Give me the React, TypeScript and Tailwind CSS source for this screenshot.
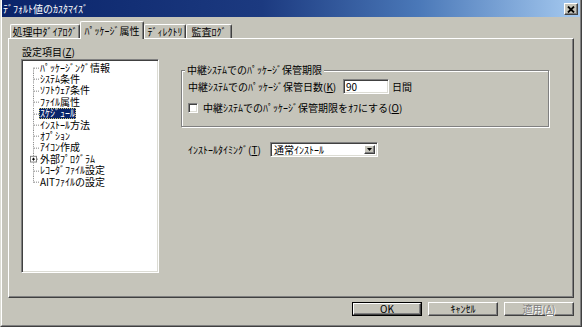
import React from 'react';

const treeItems = [
  'ﾊﾟｯｹｰｼﾞﾝｸﾞ情報',
  'ｼｽﾃﾑ条件',
  'ｿﾌﾄｳｪｱ条件',
  'ﾌｧｲﾙ属性',
  'ｽｹｼﾞｭｰﾙ',
  'ｲﾝｽﾄｰﾙ方法',
  'ｵﾌﾟｼｮﾝ',
  'ｱｲｺﾝ作成',
  '外部ﾌﾟﾛｸﾞﾗﾑ',
  'ﾚｺｰﾀﾞﾌｧｲﾙ設定',
  'AITﾌｧｲﾙの設定',
];

const raised =
  'border border-t-white border-l-white border-r-[#404040] border-b-[#404040] shadow-[inset_-1px_-1px_0_#808080]';
const sunken =
  'border border-t-[#808080] border-l-[#808080] border-r-white border-b-white shadow-[inset_1px_1px_0_#404040,inset_-1px_-1px_0_#dcdcd4]';

// dotted tree connector drawn per row
const TreeLines: React.FC<{ first: boolean; last: boolean; plus: boolean }> = ({ first, last, plus }) => (
  <svg viewBox="0 0 15 12" preserveAspectRatio="none" className="h-full w-[15px] shrink-0">
    <g stroke="#808080" strokeWidth="1" strokeDasharray="1 1" shapeRendering="crispEdges">
      {plus ? (
        <>
          <line x1="9.5" y1="0" x2="9.5" y2="3" />
          <line x1="9.5" y1="10" x2="9.5" y2="12" />
          <line x1="13" y1="6.5" x2="15" y2="6.5" />
        </>
      ) : (
        <>
          <line x1="9.5" y1={first ? 6 : 0} x2="9.5" y2={last ? 7 : 12} />
          <line x1="10" y1="6.5" x2="15" y2="6.5" />
        </>
      )}
    </g>
    {plus && (
      <g shapeRendering="crispEdges">
        <rect x="6.5" y="3.5" width="6" height="6" fill="white" stroke="#808080" />
        <line x1="8" y1="6.5" x2="11" y2="6.5" stroke="black" />
        <line x1="9.5" y1="5" x2="9.5" y2="8" stroke="black" />
      </g>
    )}
  </svg>
);

const Tab: React.FC<{ label: string; w: string; active?: boolean }> = ({ label, w, active }) => (
  <div
    className={`${w} flex items-center justify-center rounded-t-[2px] border-t border-l border-r border-t-white border-l-white border-r-[#404040] shadow-[inset_-1px_0_0_#808080] ${
      active ? 'relative z-10 -mb-px h-[18px] bg-[#c5c4ba]' : 'h-[14px]'
    }`}
  >
    {label}
  </div>
);

const Button: React.FC<{ children: React.ReactNode; def?: boolean; disabled?: boolean }> = ({ children, def, disabled }) =>
  def ? (
    <div className="w-[70px] h-[14px] border border-black">
      <div className={`h-full flex items-center justify-center ${raised}`}>{children}</div>
    </div>
  ) : (
    <div
      className={`w-[70px] h-[14px] flex items-center justify-center ${raised} ${
        disabled ? 'text-[#808080] [text-shadow:1px_1px_0_white]' : ''
      }`}
    >
      {children}
    </div>
  );

export default function App() {
  return (
    <div className="w-[582px] h-[327px] bg-[#c5c4ba] border-l border-r border-b border-l-[#dcdcd4] border-r-[#404040] border-b-[#404040] font-['Noto_Sans_CJK_JP',sans-serif] text-[10px] leading-[12px] text-black overflow-hidden">
      <div className="h-full flex flex-col border-l border-r border-b border-l-white border-r-[#808080] border-b-[#808080]">
        {/* Title bar */}
        <div className="h-[17px] shrink-0 flex items-start justify-between bg-[linear-gradient(to_right,#0a246a_0%,#1c3a80_45%,#4a78b8_72%,#a6caf0_100%)]">
          <span className="text-white pl-[1px] pt-[3px]">ﾃﾞﾌｫﾙﾄ値のｶｽﾀﾏｲｽﾞ</span>
          <div className={`mt-[3px] mr-[2px] w-[14px] h-[12px] bg-[#c5c4ba] flex items-center justify-center ${raised}`}>
            <svg width="8" height="7" viewBox="0 0 8 7">
              <path d="M1 0.5 L7 6.5 M7 0.5 L1 6.5" stroke="black" strokeWidth="1.8" />
            </svg>
          </div>
        </div>

        {/* Tabs */}
        <div className="h-[21px] shrink-0 flex items-end pl-[8px]">
          <Tab label="処理中ﾀﾞｲｱﾛｸﾞ" w="w-[70px]" />
          <Tab label="ﾊﾟｯｹｰｼﾞ属性" w="w-[64px]" active />
          <Tab label="ﾃﾞｨﾚｸﾄﾘ" w="w-[42px]" />
          <Tab label="監査ﾛｸﾞ" w="w-[46px]" />
        </div>

        {/* Tab panel */}
        <div className="mx-[6px] h-[260px] shrink-0 flex border-t border-l border-r border-b border-t-white border-l-white border-r-[#404040] border-b-[#404040] shadow-[inset_-1px_-1px_0_#808080]">
          <div className="ml-[12px] pt-[7px] flex flex-col">
            <div className="ml-px h-[12px]">
              設定項目(<span className="underline">Z</span>)
            </div>
            <div className={`mt-px w-[138px] h-[214px] bg-white ${sunken} p-[2px]`}>
              {treeItems.map((item, i) => (
                <div key={item} className="h-[11.4px] flex items-center leading-[10px]">
                  <TreeLines first={i === 0} last={i === treeItems.length - 1} plus={item === '外部ﾌﾟﾛｸﾞﾗﾑ'} />
                  <span
                    className={`px-px h-[11px] flex items-center whitespace-nowrap ${
                      item === 'ｽｹｼﾞｭｰﾙ' ? 'bg-[#0a246a] text-white outline-1 outline-dotted outline-[#c8c070] -outline-offset-1' : ''
                    }`}
                  >
                    {item}
                  </span>
                </div>
              ))}
            </div>
          </div>

          <div className="ml-[22px] pt-[31px] flex flex-col">
            {/* Group box */}
            <div className="relative w-[368px] border border-[#808080] shadow-[inset_1px_1px_0_white,1px_1px_0_white] pl-[6px] pt-[8px] pb-[12px]">
              <span className="absolute -top-[7px] left-[3px] px-[2px] bg-[#c5c4ba]">中継ｼｽﾃﾑでのﾊﾟｯｹｰｼﾞ保管期限</span>
              <div className="h-[15px] flex items-center">
                <span className="w-[155px] whitespace-nowrap">
                  中継ｼｽﾃﾑでのﾊﾟｯｹｰｼﾞ保管日数(<span className="underline">K</span>)
                </span>
                <div className={`w-[46px] h-[15px] bg-white ${sunken} pl-[2px] flex items-center`}>90</div>
                <span className="ml-[3px]">日間</span>
              </div>
              <div className="mt-[8px] h-[12px] flex items-center">
                <div className={`w-[10px] h-[10px] bg-white ${sunken}`} />
                <span className="ml-[5px] whitespace-nowrap">
                  中継ｼｽﾃﾑでのﾊﾟｯｹｰｼﾞ保管期限をｵﾌにする(<span className="underline">O</span>)
                </span>
              </div>
            </div>

            <div className="mt-[15px] pl-[7px] flex items-center h-[15px]">
              <span className="w-[82px] whitespace-nowrap">
                ｲﾝｽﾄｰﾙﾀｲﾐﾝｸﾞ(<span className="underline">T</span>)
              </span>
              <div className={`w-[108px] h-[15px] bg-white ${sunken} p-[2px] flex items-center justify-between`}>
                <span className="pl-px">通常ｲﾝｽﾄｰﾙ</span>
                <div className={`w-[11px] h-full bg-[#c5c4ba] flex items-center justify-center ${raised}`}>
                  <svg width="5" height="3" viewBox="0 0 5 3">
                    <path d="M0 0 H5 L2.5 3 Z" fill="black" />
                  </svg>
                </div>
              </div>
            </div>
          </div>
        </div>

        {/* Buttons */}
        <div className="flex justify-end gap-[6px] pr-[6px] pt-[4px]">
          <Button def>OK</Button>
          <Button>ｷｬﾝｾﾙ</Button>
          <Button disabled>
            適用(<span className="underline">A</span>)
          </Button>
        </div>
      </div>
    </div>
  );
}
